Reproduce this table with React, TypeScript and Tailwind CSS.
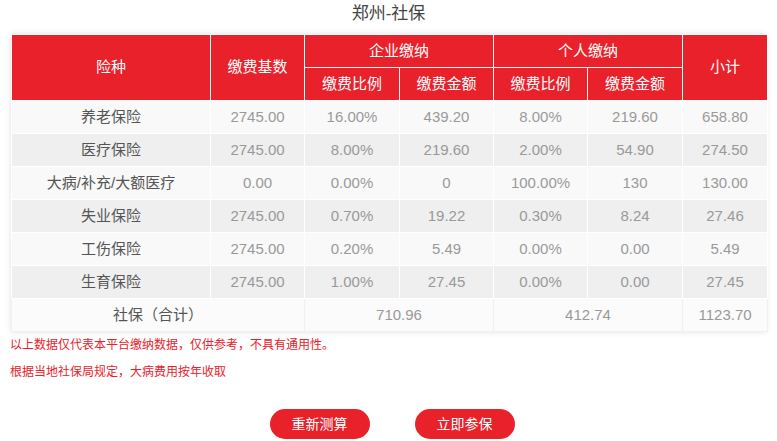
import React from 'react';

const rows = [
    ['养老保险', '2745.00', '16.00%', '439.20', '8.00%', '219.60', '658.80'],
    ['医疗保险', '2745.00', '8.00%', '219.60', '2.00%', '54.90', '274.50'],
    ['大病/补充/大额医疗', '0.00', '0.00%', '0', '100.00%', '130', '130.00'],
    ['失业保险', '2745.00', '0.70%', '19.22', '0.30%', '8.24', '27.46'],
    ['工伤保险', '2745.00', '0.20%', '5.49', '0.00%', '0.00', '5.49'],
    ['生育保险', '2745.00', '1.00%', '27.45', '0.00%', '0.00', '27.45'],
];

const th = 'border border-white font-normal text-[15px] text-white h-[33px] p-0';
const td = 'border border-white h-[33px] p-0 text-[15px] text-[#999]';

export default function App() {
    return (
        <div className="w-[777px] h-[441px] bg-white overflow-hidden font-['Liberation_Sans','Noto_Sans_CJK_SC',sans-serif]">
            <h1 className="text-center text-[17px] leading-[26px] text-[#444] font-normal pt-px">郑州-社保</h1>
            <div className="mx-[11px] mt-[7px] shadow-[0_0_6px_rgba(0,0,0,0.12)]">
                <table className="w-[756px] border-collapse table-fixed text-center">
                    <colgroup>
                        <col className="w-[199px]" />
                        <col className="w-[94px]" />
                        <col className="w-[95px]" />
                        <col className="w-[94px]" />
                        <col className="w-[94px]" />
                        <col className="w-[95px]" />
                        <col className="w-[85px]" />
                    </colgroup>
                    <thead className="bg-[#e8212b]">
                        <tr>
                            <th rowSpan={2} className={th}>险种</th>
                            <th rowSpan={2} className={th}>缴费基数</th>
                            <th colSpan={2} className={th}>企业缴纳</th>
                            <th colSpan={2} className={th}>个人缴纳</th>
                            <th rowSpan={2} className={th}>小计</th>
                        </tr>
                        <tr>
                            <th className={th}>缴费比例</th>
                            <th className={th}>缴费金额</th>
                            <th className={th}>缴费比例</th>
                            <th className={th}>缴费金额</th>
                        </tr>
                    </thead>
                    <tbody>
                        {rows.map((r, i) => (
                            <tr key={r[0]} className={i % 2 === 0 ? 'bg-[#f9f9f9]' : 'bg-[#efefef]'}>
                                {r.map((c, j) => (
                                    <td key={j} className={j === 0 ? td + ' !text-[#555]' : td}>{c}</td>
                                ))}
                            </tr>
                        ))}
                        <tr className="bg-[#fbfbfb]">
                            <td colSpan={2} className="border border-[#f0f0f0] h-[33px] p-0 text-[15px] text-[#555]">社保（合计）</td>
                            <td colSpan={2} className="border border-[#f0f0f0] h-[33px] p-0 text-[15px] text-[#999]">710.96</td>
                            <td colSpan={2} className="border border-[#f0f0f0] h-[33px] p-0 text-[15px] text-[#999]">412.74</td>
                            <td className="border border-[#f0f0f0] h-[33px] p-0 text-[15px] text-[#999]">1123.70</td>
                        </tr>
                    </tbody>
                </table>
            </div>
            <div className="px-[10px] pt-0 text-[12px] text-[#e8212b]">
                <p className="leading-[27px]">以上数据仅代表本平台缴纳数据，仅供参考，不具有通用性。</p>
                <p className="leading-[27px]">根据当地社保局规定，大病费用按年收取</p>
            </div>
            <div className="flex justify-center gap-[45px] pl-[7px] mt-[23px]">
                <button className="w-[100px] h-[30px] rounded-full bg-[#e8212b] text-white text-[14px]">重新测算</button>
                <button className="w-[100px] h-[30px] rounded-full bg-[#e8212b] text-white text-[14px]">立即参保</button>
            </div>
        </div>
    );
}
